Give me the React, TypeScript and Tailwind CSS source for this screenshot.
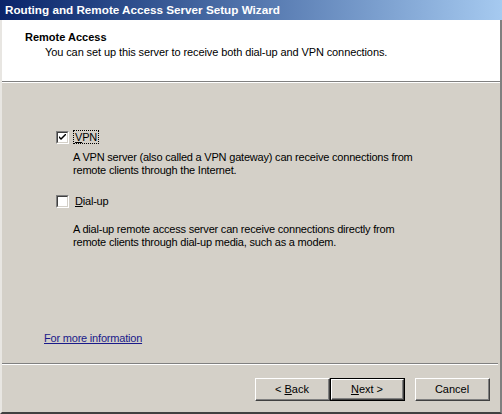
import React from "react";

function Check({ checked }: { checked: boolean }) {
  return (
    <div className="w-[13px] h-[13px] bg-white border-t border-l border-t-[#808080] border-l-[#808080] border-b border-r border-b-white border-r-white shrink-0">
      <div className="w-full h-full border-t border-l border-t-[#404040] border-l-[#404040] border-b border-r border-b-[#d4d0c8] border-r-[#d4d0c8] flex items-center justify-center">
        {checked && (
          <svg width="7" height="7" viewBox="0 0 7 7">
            <path d="M0 2 L0 4 L2 6 L7 1 L7 -1 L2 4 Z" fill="#000" />
          </svg>
        )}
      </div>
    </div>
  );
}

function Btn({ children, def }: { children: React.ReactNode; def?: boolean }) {
  const inner = (
    <div className="w-full h-full border-t border-l border-t-white border-l-white border-b border-r border-b-[#404040] border-r-[#404040]">
      <div className="w-full h-full border-b border-r border-b-[#808080] border-r-[#808080] flex items-center justify-center text-black">
        {children}
      </div>
    </div>
  );
  if (def) {
    return <div className="w-[75px] h-[23px] border border-black">{inner}</div>;
  }
  return <div className="w-[75px] h-[23px]">{inner}</div>;
}

export default function App() {
  return (
    <div
      className="w-[502px] h-[414px] bg-[#d4d0c8] flex flex-col overflow-hidden text-[11px] tracking-[-0.2px] text-black"
      style={{ fontFamily: '"Liberation Sans", Arial, sans-serif' }}
    >
      <div className="h-[20px] shrink-0 bg-gradient-to-r from-[#0a246a] to-[#a6caf0] text-white font-bold text-[11.7px] tracking-normal flex items-center pl-[5px]">
        Routing and Remote Access Server Setup Wizard
      </div>
      <div className="flex-1 flex flex-col border-l-2 border-l-[#e8e6e2] border-r-2 border-r-[#808080] border-b-2 border-b-[#404040]">
        <div className="h-[62px] shrink-0 bg-white border-b border-b-[#808080] pl-[23px] pt-[10px]">
          <div className="font-bold leading-[14px] tracking-normal">Remote Access</div>
          <div className="pl-[20px] leading-[14px] mt-[1px] tracking-[-0.1px]">
            You can set up this server to receive both dial-up and VPN connections.
          </div>
        </div>
        <div className="h-px bg-white shrink-0" />
        <div className="flex-1 flex flex-col">
          <div className="flex-1 pl-[54px] pt-[47px]">
            <div className="flex items-center gap-[4px] h-[14px]">
              <Check checked={true} />
              <span className="border border-dotted border-black leading-[12px] px-px">
                <span className="underline">V</span>PN
              </span>
            </div>
            <div className="pl-[17px] mt-[7px] leading-[13px]">
              <div>A VPN server (also called a VPN gateway) can receive connections from</div>
              <div>remote clients through the Internet.</div>
            </div>
            <div className="flex items-center gap-[5px] h-[14px] mt-[17px]">
              <Check checked={false} />
              <span className="leading-[12px] px-px">
                <span className="underline">D</span>ial-up
              </span>
            </div>
            <div className="pl-[17px] mt-[15px] leading-[13px]">
              <div>A dial-up remote access server can receive connections directly from</div>
              <div>remote clients through dial-up media, such as a modem.</div>
            </div>
            <div className="ml-[-12px] mt-[83px] text-[#1a1a8a] underline leading-[13px]">
              For more information
            </div>
          </div>
          <div className="h-px bg-[#808080] shrink-0 mr-[2px]" />
          <div className="h-px bg-white shrink-0 mr-[2px]" />
          <div className="h-[47px] shrink-0 flex items-start pt-[13px] pl-[253px] tracking-normal">
            <Btn>
              &lt; <span className="underline ml-[3px]">B</span>ack
            </Btn>
            <Btn def>
              <span className="underline">N</span>ext &gt;
            </Btn>
            <div className="w-[10px]" />
            <Btn>Cancel</Btn>
          </div>
        </div>
      </div>
    </div>
  );
}
